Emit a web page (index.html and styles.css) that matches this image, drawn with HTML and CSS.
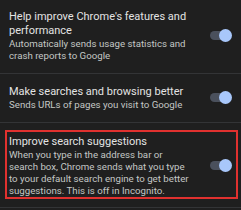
FILE: index.html
```html
<!DOCTYPE html>
<html lang="en">
<head>
    <meta charset="UTF-8">
    <meta name="viewport" content="width=device-width, initial-scale=1.0">
    <title>Sync and Google services</title>
    <link rel="stylesheet" href="styles.css">
</head>
<body>
    <div class="list">
        <div class="row">
            <div class="text">
                <div class="title">Help improve Chrome's features and performance</div>
                <div class="summary">Automatically sends usage statistics and crash reports to Google</div>
            </div>
            <div class="toggle on"><span class="track"></span><span class="knob"></span></div>
        </div>
        <div class="row">
            <div class="text">
                <div class="title">Make searches and browsing better</div>
                <div class="summary">Sends URLs of pages you visit to Google</div>
            </div>
            <div class="toggle on"><span class="track"></span><span class="knob"></span></div>
        </div>
        <div class="row highlight">
            <div class="box">
                <div class="text">
                    <div class="title">Improve search suggestions</div>
                    <div class="summary">When you type in the address bar or search box, Chrome sends what you type to your default search engine to get better suggestions. This is off in Incognito.</div>
                </div>
                <div class="toggle on"><span class="track"></span><span class="knob"></span></div>
            </div>
        </div>
    </div>
</body>
</html>
```
FILE: styles.css
```css
body {
    margin: 0;
    background-color: #1f1f1f;
    font-family: Roboto, "Noto Sans", sans-serif;
}

.list {
    margin-top: -1px;
}

.row {
    display: flex;
    align-items: center;
    padding: 11px 9px;
    border-bottom: 1px solid #333436;
}

.text {
    flex: 1;
    padding-right: 14px;
}

.title {
    font-size: 11px;
    line-height: 14px;
    color: #e3e3e3;
}

.summary {
    font-size: 9.7px;
    line-height: 12px;
    color: #c4c7c5;
}

.row.highlight {
    display: block;
    padding: 7px 3px 8px 5px;
}

.highlight .box {
    display: flex;
    align-items: center;
    border: 2px solid #e0312f;
    padding: 3px 4px 0 2px;
}

.toggle {
    position: relative;
    width: 24px;
    height: 14px;
    flex-shrink: 0;
}

.toggle .track {
    position: absolute;
    left: 2px;
    top: 2px;
    width: 20px;
    height: 9px;
    border-radius: 5px;
    background-color: #4a505c;
}

.toggle .knob {
    position: absolute;
    right: 0;
    top: 0;
    width: 13px;
    height: 13px;
    border-radius: 50%;
    background-color: #a8c7fa;
}
```
